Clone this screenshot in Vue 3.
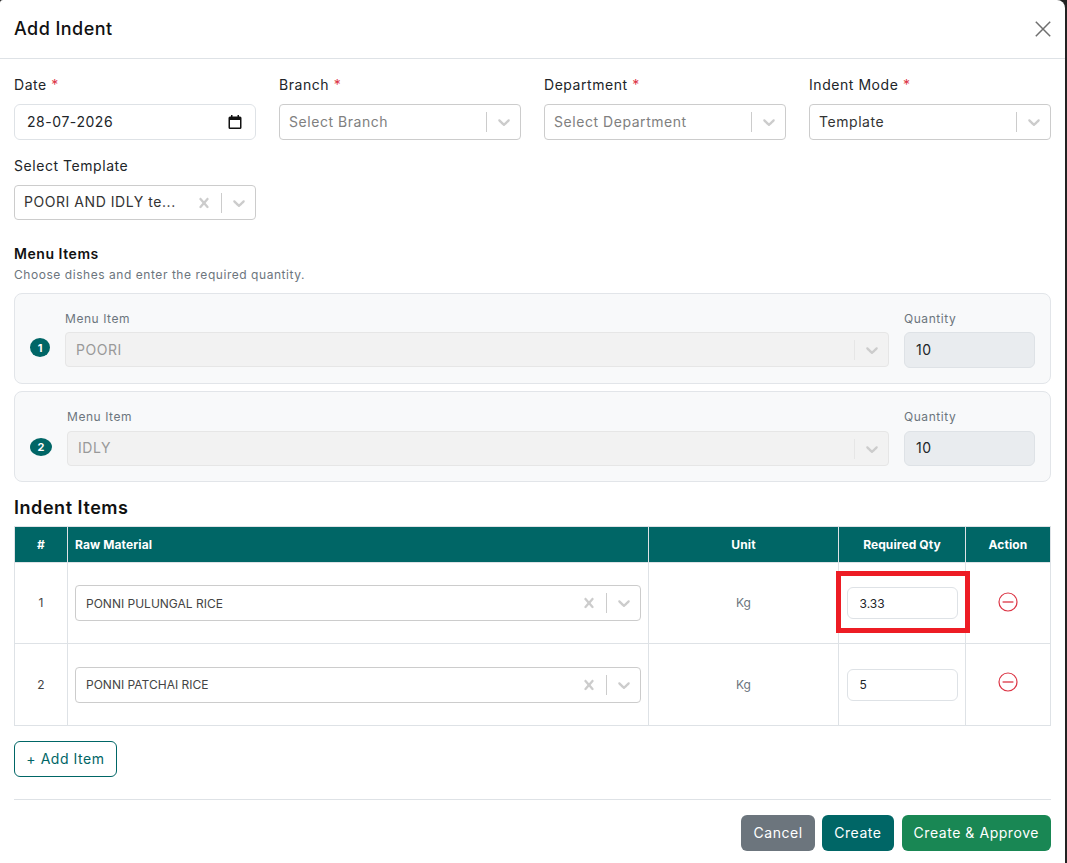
<script setup>
const topFields = [
  { label: 'Branch', placeholder: 'Select Branch' },
  { label: 'Department', placeholder: 'Select Department' },
  { label: 'Indent Mode', value: 'Template' },
];
const menuItems = [
  { name: 'POORI', qty: 10 },
  { name: 'IDLY', qty: 10 },
];
const rows = [
  { name: 'PONNI PULUNGAL RICE', unit: 'Kg', qty: '3.33', marked: true },
  { name: 'PONNI PATCHAI RICE', unit: 'Kg', qty: '5', marked: false },
];
const chevron = 'M4.516 7.548c0.436-0.446 1.043-0.481 1.576 0l3.908 3.747 3.908-3.747c0.533-0.481 1.141-0.446 1.576 0 0.436 0.445 0.408 1.197 0 1.615-0.406 0.418-4.695 4.502-4.695 4.502-0.217 0.223-0.502 0.335-0.789 0.335s-0.572-0.112-0.79-0.335c0 0-4.287-4.084-4.695-4.502s-0.436-1.17 0-1.615z';
const cross = 'M14.348 14.849c-0.469 0.469-1.229 0.469-1.697 0l-2.651-3.030-2.651 3.029c-0.469 0.469-1.229 0.469-1.697 0-0.469-0.469-0.469-1.229 0-1.697l2.758-3.15-2.759-3.152c-0.469-0.469-0.469-1.228 0-1.697s1.228-0.469 1.697 0l2.652 3.031 2.651-3.031c0.469-0.469 1.228-0.469 1.697 0s0.469 1.229 0 1.697l-2.758 3.152 2.758 3.15c0.469 0.469 0.469 1.229 0 1.698z';
</script>

<template>
  <div class="modal">
    <header class="modal-head">
      <h1>Add Indent</h1>
      <svg class="close" viewBox="0 0 16 16" width="16" height="16">
        <path d="M0.8 0.8 L15.2 15.2 M15.2 0.8 L0.8 15.2" stroke="#6f6f6f" stroke-width="1.5" fill="none" />
      </svg>
    </header>

    <div class="modal-body">
      <div class="fields">
        <div class="field">
          <label>Date <em>*</em></label>
          <div class="date-input">
            <span>28-07-2026</span>
            <svg viewBox="0 0 16 16" width="16" height="16">
              <path d="M3 2.5h10a1.5 1.5 0 0 1 1.5 1.5v9.5a1.5 1.5 0 0 1-1.5 1.5H3a1.5 1.5 0 0 1-1.5-1.5V4A1.5 1.5 0 0 1 3 2.5zM3 6v7.5h10V6z" fill="#111" fill-rule="evenodd" />
              <path d="M4 1h1.5v2H4zM10.5 1H12v2h-1.5z" fill="#111" />
            </svg>
          </div>
        </div>
        <div v-for="f in topFields" :key="f.label" class="field">
          <label>{{ f.label }} <em>*</em></label>
          <div class="select">
            <span :class="f.value ? 'val' : 'ph'">{{ f.value || f.placeholder }}</span>
            <i class="sep"></i>
            <svg class="chev" viewBox="0 0 20 20" width="20" height="20"><path :d="chevron" /></svg>
          </div>
        </div>
        <div class="field">
          <label>Select Template</label>
          <div class="select short">
            <span class="val">POORI AND IDLY te...</span>
            <svg class="x" viewBox="0 0 20 20" width="20" height="20"><path :d="cross" /></svg>
            <i class="sep"></i>
            <svg class="chev" viewBox="0 0 20 20" width="20" height="20"><path :d="chevron" /></svg>
          </div>
        </div>
      </div>

      <h2 class="menu-title">Menu Items</h2>
      <p class="menu-sub">Choose dishes and enter the required quantity.</p>

      <div class="menu-list">
        <div v-for="(m, i) in menuItems" :key="m.name" class="menu-card" :class="{ second: i === 1 }">
          <span class="badge">{{ i + 1 }}</span>
          <div class="menu-name">
            <label>Menu Item</label>
            <div class="select disabled">
              <span class="val">{{ m.name }}</span>
              <i class="sep"></i>
              <svg class="chev" viewBox="0 0 20 20" width="20" height="20"><path :d="chevron" /></svg>
            </div>
          </div>
          <div class="menu-qty">
            <label>Quantity</label>
            <div class="qty-box">{{ m.qty }}</div>
          </div>
        </div>
      </div>

      <h2 class="items-title">Indent Items</h2>
      <table class="items">
        <colgroup>
          <col style="width: 53px" />
          <col style="width: 581px" />
          <col style="width: 190px" />
          <col style="width: 127px" />
          <col style="width: 85px" />
        </colgroup>
        <thead>
          <tr>
            <th>#</th>
            <th class="left">Raw Material</th>
            <th>Unit</th>
            <th>Required Qty</th>
            <th>Action</th>
          </tr>
        </thead>
        <tbody>
          <tr v-for="(r, i) in rows" :key="r.name" :class="{ 'row-two': i === 1 }">
            <td class="num">{{ i + 1 }}</td>
            <td class="mat">
              <div class="select row-select">
                <span class="val">{{ r.name }}</span>
                <svg class="x" viewBox="0 0 20 20" width="20" height="20"><path :d="cross" /></svg>
                <i class="sep"></i>
                <svg class="chev" viewBox="0 0 20 20" width="20" height="20"><path :d="chevron" /></svg>
              </div>
            </td>
            <td class="unit">{{ r.unit }}</td>
            <td class="qty">
              <div class="qty-wrap">
                <input class="qty-input" :value="r.qty" />
                <span v-if="r.marked" class="marker"></span>
              </div>
            </td>
            <td class="act">
              <svg viewBox="0 0 20 20" width="20" height="20">
                <circle cx="10" cy="10" r="9" fill="none" stroke="#dc3545" stroke-width="1.2" />
                <path d="M4.6 10h10.8" stroke="#dc3545" stroke-width="1.3" />
              </svg>
            </td>
          </tr>
        </tbody>
      </table>

      <button class="add-btn"><span>+ Add Item</span></button>

      <footer class="foot">
        <button class="btn gray"><span>Cancel</span></button>
        <button class="btn teal"><span>Create</span></button>
        <button class="btn green"><span>Create &amp; Approve</span></button>
      </footer>
    </div>
  </div>
</template>

<style scoped>
.modal {
  width: 1065px;
  height: 863px;
  overflow: hidden;
  background: #fff;
  border-radius: 3px 8px 0 0;
  font-family: Inter, "Liberation Sans", sans-serif;
  color: #212529;
  font-size: 14px;
  letter-spacing: 0.55px;
}
.modal-head {
  height: 58px;
  border-bottom: 1px solid #dee2e6;
  display: flex;
  align-items: center;
  justify-content: space-between;
  padding: 0 14px;
}
.modal-head h1 {
  margin: 0 0 2px;
  font-size: 18px;
  font-weight: 500;
  letter-spacing: 0.45px;
  color: #111;
}
.close {
  display: block;
  margin-bottom: 1px;
}
.modal-body {
  padding: 16px 14px 0;
}
.fields {
  display: grid;
  grid-template-columns: repeat(4, 242px);
  column-gap: 23px;
  row-gap: 16px;
}
.field label {
  display: block;
  line-height: 20px;
  margin-bottom: 9px;
}
.field label em {
  font-style: normal;
  color: #dc3545;
}
.date-input {
  height: 36px;
  box-sizing: border-box;
  border: 1px solid #dee2e6;
  border-radius: 6px;
  display: flex;
  align-items: center;
  justify-content: space-between;
  padding: 0 12px;
  color: #212529;
}
.date-input span {
  padding-bottom: 2px;
}
.select {
  height: 36px;
  box-sizing: border-box;
  border: 1px solid #ccc;
  border-radius: 4px;
  display: flex;
  align-items: center;
  padding-left: 9px;
  background: #fff;
}
.select.short {
  height: 35px;
}
.select span {
  flex: 1;
  min-width: 0;
  white-space: nowrap;
  padding-bottom: 2px;
}
.ph {
  color: #808080;
}
.val {
  color: #333;
}
.sep {
  width: 1px;
  height: 20px;
  background: #ccc;
  flex: none;
}
.chev {
  fill: #ccc;
  flex: none;
  margin: 0 6px 0 7px;
}
.x {
  fill: #ccc;
  flex: none;
  margin: 0 7px 0 8px;
}
.menu-title {
  margin: 24px 0 0;
  font-size: 14px;
  font-weight: 600;
  line-height: 20px;
  color: #111;
}
.menu-sub {
  margin: 2px 0 0;
  font-size: 12px;
  line-height: 18px;
  color: #6c757d;
}
.menu-list {
  margin-top: 9px;
  display: flex;
  flex-direction: column;
  gap: 7px;
}
.menu-card {
  height: 91px;
  box-sizing: border-box;
  border: 1px solid #e2e5e9;
  border-radius: 8px;
  background: #f8f9fa;
  display: flex;
  align-items: flex-start;
  padding: 16px 15px 0;
}
.badge {
  width: 20px;
  height: 19px;
  margin-top: 28px;
  border-radius: 50%;
  background: #006666;
  color: #fff;
  font-size: 11px;
  font-weight: 700;
  letter-spacing: 0;
  display: flex;
  align-items: center;
  justify-content: center;
  flex: none;
}
.second .badge {
  width: 22px;
  height: 18px;
  margin-top: 30px;
}
.menu-name {
  flex: 1;
  min-width: 0;
  margin-left: 15px;
}
.menu-card label {
  display: block;
  font-size: 12px;
  line-height: 18px;
  color: #6c757d;
  margin-bottom: 4px;
}
.second label {
  margin-bottom: 5px;
}
.select.disabled {
  background: #f2f2f2;
  border-color: #e6e6e6;
  height: 35px;
}
.select.disabled span {
  padding-left: 1px;
  padding-bottom: 0;
}
.second .select.disabled span {
  padding-bottom: 2px;
}
.select.disabled .val {
  color: #999;
}
.select.disabled .sep {
  background: #e6e6e6;
}
.menu-qty {
  width: 131px;
  margin-left: 15px;
  flex: none;
}
.qty-box {
  height: 36px;
  box-sizing: border-box;
  border: 1px solid #dee2e6;
  border-radius: 6px;
  background: #e9ecef;
  display: flex;
  align-items: center;
  padding: 0 11px 2px;
  color: #212529;
}
.second .qty-box {
  height: 35px;
}
.items-title {
  margin: 15px 0 7px;
  font-size: 18px;
  font-weight: 600;
  line-height: 22px;
  color: #111;
}
.items {
  width: 1036px;
  table-layout: fixed;
  border-collapse: collapse;
}
.items th,
.items td {
  border: 1px solid #dee2e6;
  padding: 0;
  text-align: center;
  font-size: 12px;
  letter-spacing: 0;
}
.items th {
  height: 35px;
  background: #006666;
  color: #fff;
  font-weight: 700;
  letter-spacing: 0.1px;
}
.items th.left {
  text-align: left;
  padding-left: 7px;
}
.items td {
  height: 80px;
  color: #444;
}
.items .row-two td {
  height: 81px;
}
.items td.num,
.items td.unit {
  height: 78px;
  padding-bottom: 2px;
}
.items .row-two td.num,
.items .row-two td.unit {
  height: 81px;
  padding-bottom: 0;
}
.items td.mat {
  padding: 0 7px;
  text-align: left;
}
.row-select {
  font-size: 12px;
}
.row-select span {
  padding-left: 1px;
  padding-bottom: 0;
}
.row-select .val {
  color: #444;
}
.items td.unit {
  color: #6c757d;
}
.qty-wrap {
  position: relative;
  width: 111px;
  margin: 0 auto;
}
.qty-input {
  display: block;
  width: 100%;
  height: 32px;
  box-sizing: border-box;
  border: 1px solid #dee2e6;
  border-radius: 6px;
  padding: 0 12px;
  font: 12px Inter, sans-serif;
  color: #212529;
  outline: none;
}
.marker {
  position: absolute;
  left: -11px;
  top: -16px;
  width: 134px;
  height: 62px;
  box-sizing: border-box;
  border: 5px solid #ed1c24;
}
.act svg {
  display: block;
  margin: -2px auto 0;
}
.row-two .act svg {
  margin-top: -5px;
}
.add-btn {
  display: block;
  margin-top: 15px;
  width: 103px;
  height: 36px;
  border: 1px solid #006666;
  border-radius: 6px;
  background: #fff;
  color: #006666;
  font: 14px Inter, sans-serif;
  letter-spacing: 0.55px;
  padding: 0 0 2px;
}
.foot {
  margin-top: 22px;
  border-top: 1px solid #dee2e6;
  padding-top: 15px;
  display: flex;
  justify-content: flex-end;
  gap: 7px;
}
.btn {
  height: 36px;
  border: none;
  border-radius: 6px;
  color: #fff;
  font: 14px Inter, sans-serif;
  letter-spacing: 0.55px;
  padding: 0 12px 2px;
}
.gray {
  background: #6c757d;
  padding-left: 12.5px;
  padding-right: 12.5px;
}
.teal {
  background: #006666;
}
.green {
  background: #198754;
  margin-left: 1px;
}
</style>

<style>
body {
  background: #222;
}
</style>
